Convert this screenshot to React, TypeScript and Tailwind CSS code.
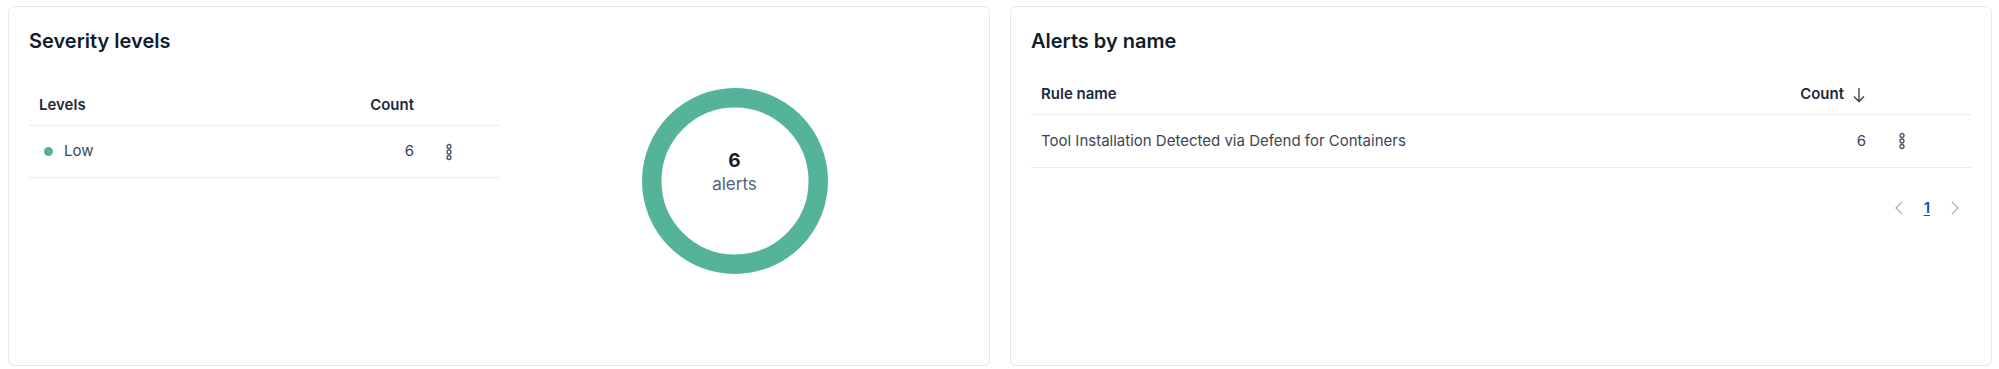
import React from "react";

function BoxesVertical() {
  return (
    <svg width="16" height="18" viewBox="0 0 16 18" fill="none">
      <circle cx="8" cy="3.5" r="2" stroke="#4a5568" strokeWidth="1.3" />
      <circle cx="8" cy="9" r="2" stroke="#4a5568" strokeWidth="1.3" />
      <circle cx="8" cy="14.5" r="2" stroke="#4a5568" strokeWidth="1.3" />
    </svg>
  );
}

function SortDown() {
  return (
    <svg width="14" height="18" viewBox="0 0 14 18" fill="none">
      <path d="M7 2v13.5M2 10.5l5 5 5-5" stroke="#343741" strokeWidth="1.3" />
    </svg>
  );
}

function Chevron({ dir }: { dir: "left" | "right" }) {
  return (
    <svg width="12" height="18" viewBox="0 0 12 18" fill="none">
      <path
        d={dir === "left" ? "M9 3L3 9l6 6" : "M3 3l6 6-6 6"}
        stroke="#a2b0c6"
        strokeWidth="1.3"
      />
    </svg>
  );
}

function Panel({ title, children, gap }: { title: string; children: React.ReactNode; gap: string }) {
  return (
    <div className="flex-1 h-[360px] rounded-md border border-[#e3e8f2] bg-white p-[20px] flex flex-col">
      <h2 className={`text-[20px] leading-[28px] font-semibold text-[#111c2c] ${gap}`}>{title}</h2>
      {children}
    </div>
  );
}

export default function App() {
  return (
    <div
      className="w-[1999px] h-[369px] bg-white flex gap-[20px] pl-[8px] pr-[7px] pt-[6px]"
      style={{ fontFamily: "Inter, 'Noto Sans', sans-serif" }}
    >
      <Panel title="Severity levels" gap="mb-[31px]">
        <div className="flex">
          <div className="w-[471px] text-[15px]">
            <div className="flex items-center h-[40px] border-b border-[#e9edf3] font-semibold text-[#1d2a3e]">
              <div className="flex-1 px-[10px]">Levels</div>
              <div className="px-[10px] text-right">Count</div>
              <div className="w-[76px]" />
            </div>
            <div className="flex items-center h-[52px] border-b border-[#e9edf3] text-[#3b4556]">
              <div className="flex-1 px-[10px] flex items-center">
                <span className="w-[9px] h-[9px] rounded-full bg-[#54b399] mr-[11px] ml-[5px]" />
                Low
              </div>
              <div className="px-[10px] text-right">6</div>
              <div className="w-[50px] flex justify-center">
                <BoxesVertical />
              </div>
              <div className="w-[26px]" />
            </div>
          </div>
          <div className="flex-1 flex justify-center pt-[2px]">
            <div className="relative w-[186px] h-[186px]">
              <svg width="186" height="186" viewBox="0 0 186 186">
                <circle cx="93" cy="93" r="83.25" fill="none" stroke="#54b399" strokeWidth="19.5" />
              </svg>
              <div className="absolute inset-0 flex flex-col items-center justify-center pb-[18px]">
                <span className="text-[19px] leading-[24px] font-bold text-[#111c2c]">6</span>
                <span className="text-[17px] leading-[22px] text-[#516381]">alerts</span>
              </div>
            </div>
          </div>
        </div>
      </Panel>
      <Panel title="Alerts by name" gap="mb-[20px]">
        <div className="text-[15px]">
          <div className="flex items-center h-[40px] border-b border-[#e9edf3] font-semibold text-[#1d2a3e]">
            <div className="flex-1 px-[10px]">Rule name</div>
            <div className="px-[10px] flex items-center gap-[8px]">
              Count
              <SortDown />
            </div>
            <div className="w-[95px]" />
          </div>
          <div className="flex items-center h-[53px] border-b border-[#e9edf3] text-[#3b4556]">
            <div className="flex-1 px-[10px]">Tool Installation Detected via Defend for Containers</div>
            <div className="px-[10px] text-right">6</div>
            <div className="w-[52px] flex justify-center">
              <BoxesVertical />
            </div>
            <div className="w-[43px]" />
          </div>
          <div className="flex justify-end items-center mt-[28px] h-[24px] pr-[10px] gap-[14px]">
            <Chevron dir="left" />
            <span className="text-[15px] font-semibold text-[#1750ba] underline underline-offset-2 px-[5px]">1</span>
            <Chevron dir="right" />
          </div>
        </div>
      </Panel>
    </div>
  );
}
